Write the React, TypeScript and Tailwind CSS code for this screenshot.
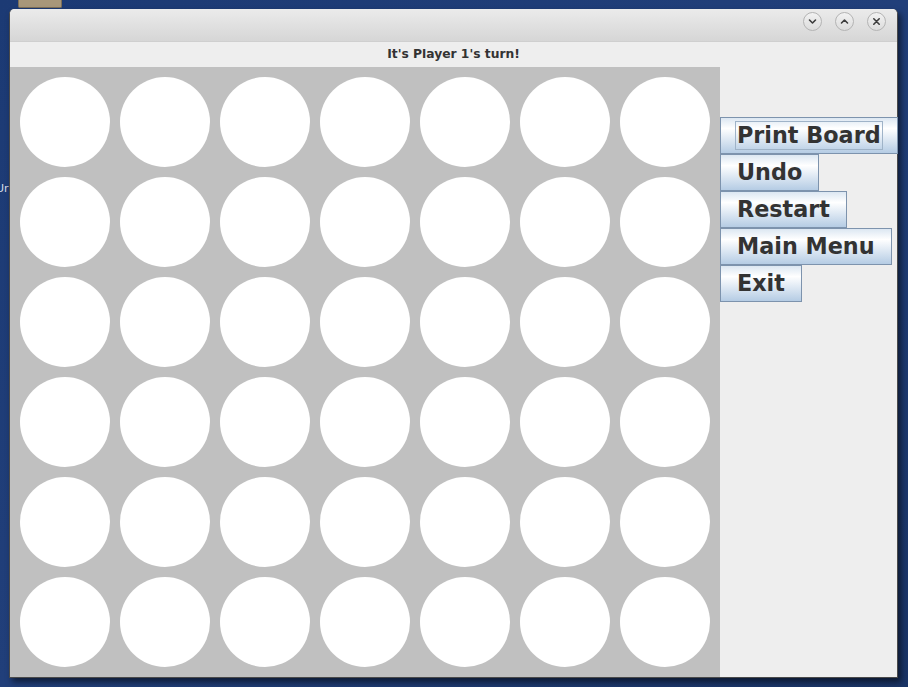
import React from 'react';

const ROWS = 6;
const COLS = 7;

const buttons = ['Print Board', 'Undo', 'Restart', 'Main Menu', 'Exit'];

const TitleButton = ({ kind }: { kind: 'min' | 'max' | 'close' }) => (
  <div className="w-[19px] h-[19px] rounded-full border border-[#b4b4b4] bg-gradient-to-b from-[#f2f2f2] to-[#dcdcdc] flex items-center justify-center">
    <svg width="9" height="9" viewBox="0 0 9 9" fill="none" stroke="#3c3c3c" strokeWidth="1.6" strokeLinecap="round" strokeLinejoin="round">
      {kind === 'min' && <path d="M1.5 3 L4.5 6 L7.5 3" />}
      {kind === 'max' && <path d="M1.5 6 L4.5 3 L7.5 6" />}
      {kind === 'close' && <path d="M1.8 1.8 L7.2 7.2 M7.2 1.8 L1.8 7.2" />}
    </svg>
  </div>
);

export default function App() {
  return (
    <div className="relative w-[908px] h-[687px] overflow-hidden bg-gradient-to-br from-[#1c3a74] via-[#213f7a] to-[#1a3466] pl-[9px] pt-[9px]" style={{ fontFamily: '"DejaVu Sans", sans-serif' }}>
      {/* desktop bits peeking out */}
      <div className="absolute left-[18px] top-0 w-[44px] h-[8px] rounded-b-[2px] bg-[#a8977a] border-x border-b border-[#7d6f58]" />
      <div className="absolute left-[-4px] top-[181px] text-[11px] whitespace-nowrap text-[#d8dce6]">Ur</div>

      <div className="relative w-[889px] h-[669px] flex flex-col border-x border-b border-[#4a4a4a] rounded-t-[5px] bg-[#eeeeee] shadow-[3px_4px_6px_rgba(0,0,0,0.55)]">
        <div className="h-[33px] flex justify-end items-start pt-[3px] pr-[11px] gap-[13px] rounded-t-[5px] bg-gradient-to-b from-[#ebebeb] to-[#d6d6d6] border-b border-[#cfcfcf]">
          <TitleButton kind="min" />
          <TitleButton kind="max" />
          <TitleButton kind="close" />
        </div>
        <div className="h-[25px] flex items-center justify-center text-[12.3px] font-bold text-[#333333] whitespace-nowrap">
          It's Player 1's turn!
        </div>
        <div className="flex h-[610px]">
          <div className="w-[710px] h-[610px] shrink-0 bg-[#c0c0c0] pl-[10px] pt-[10px] grid grid-cols-[repeat(7,90px)] grid-rows-[repeat(6,90px)] gap-[10px]">
            {Array.from({ length: ROWS * COLS }).map((_, i) => (
              <div key={i} className="w-[90px] h-[90px] rounded-full bg-white" />
            ))}
          </div>
          <div className="flex-1 flex flex-col items-start pt-[50px]">
            {buttons.map((b, i) => (
              <div key={b} className="h-[37px] flex items-center px-[14px] border border-[#7d93ad] bg-gradient-to-b from-[#dce7f2] via-white via-30% to-[#b5cce4]">
                <span className={`px-[1px] pt-[2px] pb-[2px] text-[22.3px] leading-[23px] font-bold text-[#333333] whitespace-nowrap border ${i === 0 ? 'border-[#9fb3c8]' : 'border-transparent'}`}>
                  {b}
                </span>
              </div>
            ))}
          </div>
        </div>
      </div>
    </div>
  );
}
